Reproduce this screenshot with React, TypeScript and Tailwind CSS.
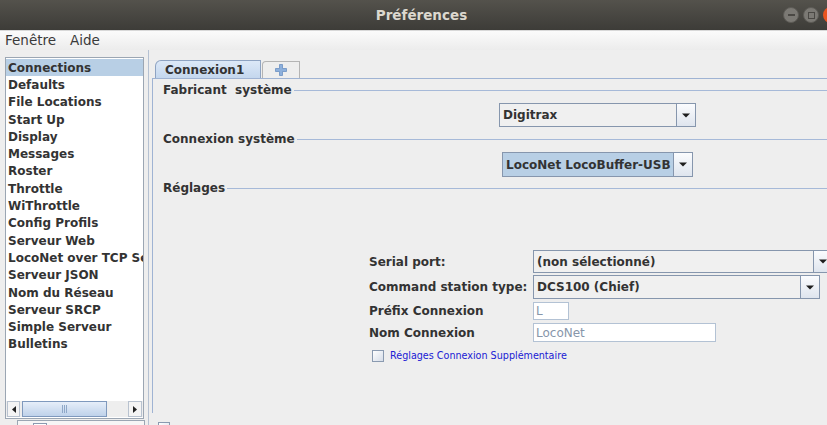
import React from "react";

const items = [
  "Connections",
  "Defaults",
  "File Locations",
  "Start Up",
  "Display",
  "Messages",
  "Roster",
  "Throttle",
  "WiThrottle",
  "Config Profils",
  "Serveur Web",
  "LocoNet over TCP Serveur",
  "Serveur JSON",
  "Nom du Réseau",
  "Serveur SRCP",
  "Simple Serveur",
  "Bulletins",
];

// petite flèche noire des combos Metal
const DownArrow = () => (
  <svg width="8" height="5" viewBox="0 0 8 5">
    <path d="M0 0.5h8L4 4.5z" fill="#1e1e1e" />
  </svg>
);

const Combo: React.FC<{ text: string; className: string; selected?: boolean }> = ({
  text,
  className,
  selected,
}) => (
  <div className={`flex border border-[#8696ad] ${className}`}>
    <div
      className={`flex flex-1 items-center overflow-hidden whitespace-nowrap pl-[3px] text-[12px] font-bold text-[#333] ${
        selected ? "bg-[#b8cfe5]" : "bg-[#f0f0f0]"
      }`}
    >
      {text}
    </div>
    <div className="flex w-[19px] shrink-0 items-center justify-center border-l border-[#8696ad] bg-linear-to-b from-[#fbfcfe] to-[#dfe5ee]">
      <DownArrow />
    </div>
  </div>
);

const Section: React.FC<{ title: string; className?: string }> = ({ title, className }) => (
  <div className={`flex h-[16px] items-center ${className ?? ""}`}>
    <span className="whitespace-pre pr-[2px] text-[12px] font-bold text-[#333]">{title}</span>
    <div className="h-px flex-1 bg-[#a6b9d8]" />
  </div>
);

const Checkbox = () => (
  <div className="h-[12px] w-[12px] shrink-0 border border-[#8a9ab0] bg-linear-to-br from-[#ffffff] to-[#d6dde8]" />
);

export default function App() {
  return (
    <div className="flex h-[425px] w-[827px] flex-col overflow-hidden bg-[#eeeeee] font-['DejaVu_Sans',sans-serif] text-[#333]">
      {/* Barre de titre */}
      <div className="grid h-[30px] shrink-0 grid-cols-[1fr_auto_1fr] items-center bg-linear-to-b from-[#54524c] to-[#3d3c38]">
        <div />
        <div className="pl-[16px] text-[13.5px] font-bold text-[#dcd8cf]">Préférences</div>
        <div className="mr-[-12px] flex items-center justify-end gap-[4px]">
          <div className="flex h-[16px] w-[16px] items-center justify-center rounded-full border border-[#5d5b56] bg-[#7b7974]">
            <div className="h-[2px] w-[7px] bg-[#4a4844]" />
          </div>
          <div className="flex h-[16px] w-[16px] items-center justify-center rounded-full border border-[#5d5b56] bg-[#7b7974]">
            <div className="h-[7px] w-[7px] border border-[#4a4844]" />
          </div>
          <div className="h-[16px] w-[16px] rounded-full bg-[#e9541f]" />
        </div>
      </div>

      {/* Barre de menu */}
      <div className="flex h-[20px] shrink-0 items-center gap-[14px] border-t border-[#d8d8d8] bg-linear-to-b from-[#fbfbfb] to-[#ececec] pl-[5px] text-[13.5px] text-[#3a3a3a]">
        <span>Fenêtre</span>
        <span>Aide</span>
      </div>

      <div className="flex flex-1">
        {/* Liste de gauche */}
        <div className="flex w-[146px] shrink-0 flex-col pl-[5px] pt-[7px]">
          <div className="flex h-[362px] w-[139px] flex-col border border-[#9ba6b3] bg-white">
            <div className="flex-1 overflow-hidden pt-[1px]">
              {items.map((it, i) => (
                <div
                  key={it}
                  className={`flex h-[17.3px] items-center whitespace-nowrap pl-[2px] text-[12px] font-bold text-[#333] ${
                    i === 0 ? "bg-[#b8cfe5]" : ""
                  }`}
                >
                  {it}
                </div>
              ))}
            </div>
            {/* barre de défilement horizontale */}
            <div className="mb-[1px] flex h-[16px] items-stretch bg-[#eeeeee] px-[1px]">
              <div className="flex w-[13px] items-center justify-center border border-[#b8c2cf] bg-[#f4f4f4]">
                <svg width="4" height="7" viewBox="0 0 4 7">
                  <path d="M4 0v7L0 3.5z" fill="#222" />
                </svg>
              </div>
              <div className="ml-[2px] flex w-[85px] items-center justify-center border border-[#7f99bd] bg-linear-to-b from-[#e6eef9] to-[#bfd2ea]">
                <div className="flex h-[8px] gap-[1px]">
                  <div className="w-px bg-[#8fa8c8]" />
                  <div className="w-px bg-[#8fa8c8]" />
                  <div className="w-px bg-[#8fa8c8]" />
                </div>
              </div>
              <div className="flex-1" />
              <div className="flex w-[14px] items-center justify-center border border-[#b8c2cf] bg-[#f4f4f4]">
                <svg width="4" height="7" viewBox="0 0 4 7">
                  <path d="M0 0v7L4 3.5z" fill="#222" />
                </svg>
              </div>
            </div>
          </div>
          <div className="ml-[12px] mt-[1px] flex h-[12px] w-[128px] items-start border border-[#9ba6b3] bg-[#f6f6f6] pl-[15px] pt-[2px]">
            <div className="h-[10px] w-[14px] border border-[#8a9ab0] bg-white" />
          </div>
        </div>

        {/* séparateur */}
        <div className="flex w-[4px] shrink-0 justify-center">
          <div className="w-px bg-[#b5c1d2]" />
        </div>

        {/* Panneau de droite */}
        <div className="flex flex-1 flex-col pt-[10px]">
          <div className="ml-[5px] flex items-end">
            <div className="flex h-[18px] w-[106px] items-center rounded-tl-[6px] border border-b-0 border-[#8ea3c2] bg-linear-to-b from-[#dce8f7] to-[#c4d7ee] pl-[9px] text-[12px] font-bold text-[#333]">
              Connexion1
            </div>
            <div className="ml-[1px] flex h-[17px] w-[38px] items-center justify-center rounded-tl-[4px] border border-b-0 border-[#b4b4b4] bg-[#eeeeee]">
              <svg width="12" height="12" viewBox="0 0 12 12">
                <path d="M4.5 0.5h3v4h4v3h-4v4h-3v-4h-4v-3h4z" fill="#8db0dc" stroke="#6b90c2" strokeWidth="0.8" />
              </svg>
            </div>
          </div>

          <div className="ml-[2px] flex h-[335px] flex-col border-l border-t border-[#9fb3d3] pl-[10px] pt-[3px]">
            <Section title="Fabricant  système" />
            <Combo text="Digitrax" className="ml-[336px] mt-[5px] h-[24px] w-[197px]" />
            <Section title="Connexion système" className="mt-[4px]" />
            <Combo text="LocoNet LocoBuffer-USB" selected className="ml-[339px] mt-[5px] h-[25px] w-[191px]" />
            <Section title="Réglages" className="mt-[3px]" />

            {/* formulaire */}
            <div className="ml-[206px] mt-[54px] flex flex-col">
              <div className="flex h-[23px] items-center">
                <span className="w-[164px] shrink-0 text-[12px] font-bold">Serial port:</span>
                <Combo text="(non sélectionné)" className="h-[23px] w-[300px] shrink-0" />
              </div>
              <div className="mt-[2px] flex h-[24px] items-center">
                <span className="w-[164px] shrink-0 text-[12px] font-bold">Command station type:</span>
                <Combo text="DCS100 (Chief)" className="h-[24px] w-[287px] shrink-0" />
              </div>
              <div className="mt-[3px] flex h-[18px] items-center">
                <span className="w-[164px] shrink-0 text-[12px] font-bold">Préfix Connexion</span>
                <div className="flex h-[18px] w-[36px] items-center border border-[#b3c2d4] bg-white pl-[2px] text-[12px] text-[#8796aa]">
                  L
                </div>
              </div>
              <div className="mt-[3px] flex h-[19px] items-center">
                <span className="w-[164px] shrink-0 text-[12px] font-bold">Nom Connexion</span>
                <div className="flex h-[19px] w-[183px] items-center border border-[#b3c2d4] bg-white pl-[2px] text-[12px] text-[#8796aa]">
                  LocoNet
                </div>
              </div>
              <div className="ml-[3px] mt-[7px] flex items-center gap-[6px]">
                <Checkbox />
                <span className="text-[9.6px] text-[#2020d4]">Réglages Connexion Supplémentaire</span>
              </div>
            </div>
          </div>

          <div className="ml-[8px] mt-[9px] flex items-start gap-[5px]">
            <Checkbox />
            <span className="text-[12px] text-[#555]">Démarrer automatiquement</span>
          </div>
        </div>
      </div>
    </div>
  );
}
